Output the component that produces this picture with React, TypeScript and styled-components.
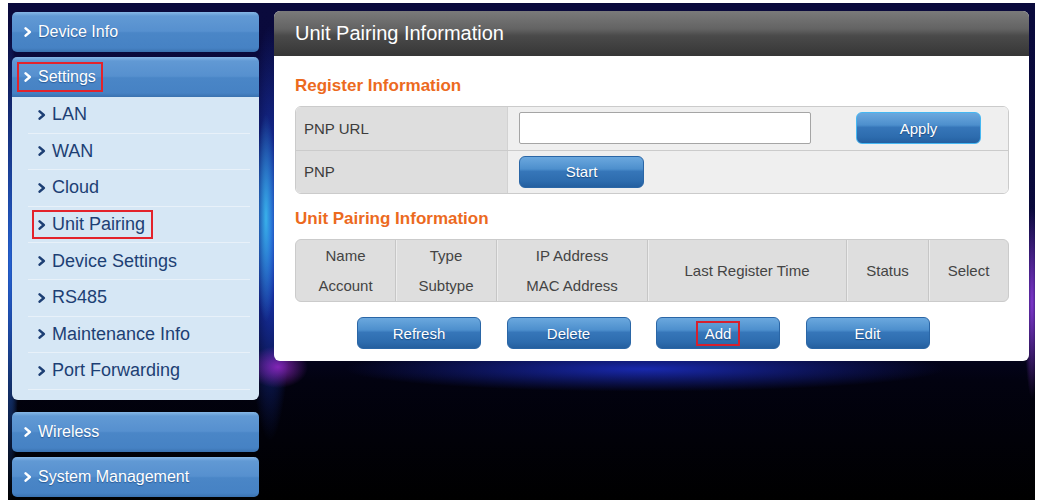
import styled, { createGlobalStyle } from "styled-components";

const GlobalStyle = createGlobalStyle`
  html, body {
    margin: 0;
    padding: 0;
    background: #ffffff;
  }
  body {
    font-family: "Liberation Sans", Arial, sans-serif;
  }
  * {
    box-sizing: border-box;
  }
`;

const settingsItems = [
  "LAN",
  "WAN",
  "Cloud",
  "Unit Pairing",
  "Device Settings",
  "RS485",
  "Maintenance Info",
  "Port Forwarding",
];

const columns = [
  { lines: ["Name", "Account"] },
  { lines: ["Type", "Subtype"] },
  { lines: ["IP Address", "MAC Address"] },
  { lines: ["Last Register Time"] },
  { lines: ["Status"] },
  { lines: ["Select"] },
];

const actions = ["Refresh", "Delete", "Add", "Edit"];

const Chevron = ({ color }: { color: string }) => (
  <svg width="8" height="10" viewBox="0 0 8 10">
    <path
      d="M1.6 1.4 L5.8 5 L1.6 8.6"
      fill="none"
      stroke={color}
      strokeWidth="2.5"
      strokeLinecap="round"
      strokeLinejoin="round"
    />
  </svg>
);

const App = () => {
  return (
    <>
      <GlobalStyle />
      <Frame>
        <Sidebar>
          <MenuHeader>
            <Label $marked={false}>
              <Chevron color="#ffffff" />
              Device Info
            </Label>
          </MenuHeader>

          <MenuGroup>
            <MenuHeader $open>
              <Label $marked>
                <Chevron color="#ffffff" />
                Settings
              </Label>
            </MenuHeader>
            <SubPanel>
              {settingsItems.map((item) => (
                <SubItem key={item}>
                  <SubLabel $marked={item === "Unit Pairing"}>
                    <Chevron color="#1d3f74" />
                    {item}
                  </SubLabel>
                </SubItem>
              ))}
            </SubPanel>
          </MenuGroup>

          <MenuHeader $gap={12}>
            <Label $marked={false}>
              <Chevron color="#ffffff" />
              Wireless
            </Label>
          </MenuHeader>
          <MenuHeader $gap={5}>
            <Label $marked={false}>
              <Chevron color="#ffffff" />
              System Management
            </Label>
          </MenuHeader>
        </Sidebar>

        <Panel>
          <PanelHeader>Unit Pairing Information</PanelHeader>
          <PanelBody>
            <SectionTitle $top={18}>Register Information</SectionTitle>
            <FormTable>
              <FormRow>
                <FormLabel>PNP URL</FormLabel>
                <FormValue>
                  <UrlInput type="text" />
                  <BlueButton $focused style={{ marginLeft: 45 }}>
                    Apply
                  </BlueButton>
                </FormValue>
              </FormRow>
              <FormRow $last>
                <FormLabel>PNP</FormLabel>
                <FormValue>
                  <BlueButton>Start</BlueButton>
                </FormValue>
              </FormRow>
            </FormTable>

            <SectionTitle $top={13}>Unit Pairing Information</SectionTitle>
            <ListTable>
              {columns.map((col, i) => (
                <ListHead key={i} $first={i === 0}>
                  {col.lines.map((line) => (
                    <HeadLine key={line}>{line}</HeadLine>
                  ))}
                </ListHead>
              ))}
            </ListTable>

            <ActionRow>
              {actions.map((action) => (
                <BlueButton key={action}>
                  {action === "Add" ? <Marked>{action}</Marked> : action}
                </BlueButton>
              ))}
            </ActionRow>
          </PanelBody>
        </Panel>
      </Frame>
    </>
  );
};

const Frame = styled.div`
  display: flex;
  align-items: flex-start;
  gap: 15px;
  height: 497px;
  margin: 3px 6px 3px 8px;
  padding: 8px 6px 0 4px;
  background:
    radial-gradient(ellipse 400px 30px at 62% 366px, rgba(30, 50, 210, 0.8), transparent 75%),
    radial-gradient(ellipse 40px 28px at 270px 364px, rgba(150, 40, 200, 0.85), transparent 75%),
    radial-gradient(ellipse 14px 130px at 258px 215px, rgba(60, 190, 240, 0.9), transparent 80%),
    radial-gradient(ellipse 30px 260px at 262px 230px, rgba(30, 70, 220, 0.9), transparent 80%),
    radial-gradient(ellipse 10px 120px at 1024px 300px, rgba(140, 60, 220, 0.9), transparent 80%),
    radial-gradient(ellipse 12px 300px at 2px 260px, rgba(40, 110, 230, 0.9), transparent 80%),
    linear-gradient(180deg, #0a0a3c 0%, #08083a 60%, #020210 76%, #000000 100%);
`;

const Sidebar = styled.nav`
  display: flex;
  flex-direction: column;
  width: 247px;
  margin-top: 1px;
`;

const MenuGroup = styled.div`
  display: flex;
  flex-direction: column;
  margin-top: 5px;
`;

const MenuHeader = styled.div<{ $open?: boolean; $gap?: number }>`
  display: flex;
  align-items: center;
  height: 40px;
  margin-top: ${({ $gap }) => ($gap ? `${$gap}px` : "0")};
  padding-left: 5px;
  border-radius: ${({ $open }) => ($open ? "5px 5px 0 0" : "5px")};
  background: linear-gradient(
    180deg,
    #86b7e6 0%,
    #6199d4 10%,
    #5690cf 48%,
    #4a86c7 52%,
    #4682c4 90%,
    #3a72b0 100%
  );
  color: #ffffff;
  font-size: 16px;
  text-shadow: 0 1px 1px rgba(0, 40, 90, 0.45);
`;

const Label = styled.span<{ $marked: boolean }>`
  display: flex;
  align-items: center;
  gap: 6px;
  height: 30px;
  padding: 0 5px;
  border: 2px solid ${({ $marked }) => ($marked ? "#e3232b" : "transparent")};
`;

const SubPanel = styled.div`
  display: flex;
  flex-direction: column;
  height: 303px;
  padding: 0 9px 10px 16px;
  border-radius: 0 0 6px 6px;
  background: #d6e7f5;
`;

const SubItem = styled.div`
  display: flex;
  align-items: center;
  height: 36.6px;
  padding-left: 4px;
  border-bottom: 1px solid #e8f1f9;
`;

const SubLabel = styled.span<{ $marked: boolean }>`
  display: flex;
  align-items: center;
  gap: 6px;
  height: 29px;
  padding: 0 6px 0 4px;
  border: 2px solid ${({ $marked }) => ($marked ? "#e3232b" : "transparent")};
  color: #1d3f74;
  font-size: 18px;
`;

const Panel = styled.section`
  display: flex;
  flex-direction: column;
  width: 755px;
  height: 350px;
  border-radius: 6px;
  overflow: hidden;
  background: #ffffff;
`;

const PanelHeader = styled.h2`
  display: flex;
  align-items: center;
  height: 45px;
  margin: 0;
  padding-left: 21px;
  background: linear-gradient(
    180deg,
    #7a7a7a 0%,
    #636363 40%,
    #4a4a4a 55%,
    #363636 100%
  );
  color: #ffffff;
  font-size: 20px;
  font-weight: normal;
`;

const PanelBody = styled.div`
  display: flex;
  flex-direction: column;
  padding: 0 20px 0 21px;
`;

const SectionTitle = styled.h3<{ $top: number }>`
  margin: ${({ $top }) => $top}px 0 8px;
  line-height: 24px;
  color: #ec6a1e;
  font-size: 17px;
  font-weight: bold;
`;

const FormTable = styled.div`
  display: flex;
  flex-direction: column;
  height: 88px;
  border: 1px solid #cbcbcb;
  border-radius: 6px;
  overflow: hidden;
`;

const FormRow = styled.div<{ $last?: boolean }>`
  display: grid;
  grid-template-columns: 212px 1fr;
  flex: 1;
  border-bottom: ${({ $last }) => ($last ? "none" : "1px solid #cbcbcb")};
`;

const FormLabel = styled.div`
  display: flex;
  align-items: center;
  padding-left: 8px;
  border-right: 1px solid #d2d2d2;
  background: #dedede;
  color: #3c3c3c;
  font-size: 15px;
`;

const FormValue = styled.div`
  display: flex;
  align-items: center;
  padding-left: 11px;
  background: #efefef;
`;

const UrlInput = styled.input`
  width: 292px;
  height: 32px;
  padding: 0 6px;
  border: 1px solid #a5a5a5;
  border-radius: 2px;
  background: #ffffff;
  font-family: inherit;
  font-size: 15px;
  outline: none;
`;

const BlueButton = styled.button<{ $focused?: boolean }>`
  display: flex;
  align-items: center;
  justify-content: center;
  width: 125px;
  height: 32px;
  padding: 0;
  border: 1px solid ${({ $focused }) => ($focused ? "#45b7f2" : "#2a66a6")};
  border-radius: 6px;
  background: linear-gradient(
    180deg,
    #6ba8de 0%,
    #4d8fcd 40%,
    #3676b9 48%,
    #2d6cae 80%,
    #245f9f 100%
  );
  color: #ffffff;
  font-family: "Liberation Sans", Arial, sans-serif;
  font-size: 15px;
  text-shadow: 0 1px 1px rgba(0, 30, 70, 0.45);
  cursor: pointer;
`;

const ListTable = styled.div`
  display: grid;
  grid-template-columns: 99px 101px 151px 199px 82px 1fr;
  height: 63px;
  border: 1px solid #cbcbcb;
  border-radius: 6px;
  overflow: hidden;
  background: #dedede;
`;

const ListHead = styled.div<{ $first: boolean }>`
  display: flex;
  flex-direction: column;
  align-items: center;
  justify-content: center;
  border-left: ${({ $first }) => ($first ? "none" : "1px solid #c6c6c6")};
  box-shadow: ${({ $first }) => ($first ? "none" : "inset 1px 0 0 #ececec")};
  color: #444444;
  font-size: 15px;
`;

const HeadLine = styled.span`
  line-height: 30px;
`;

const ActionRow = styled.div`
  display: flex;
  gap: 25.5px;
  margin-top: 15px;
  padding-left: 62px;

  & > button {
    width: 124px;
  }
`;

const Marked = styled.span`
  display: flex;
  align-items: center;
  height: 25px;
  padding: 0 7px;
  border: 2px solid #d6202e;
`;

export default App;
